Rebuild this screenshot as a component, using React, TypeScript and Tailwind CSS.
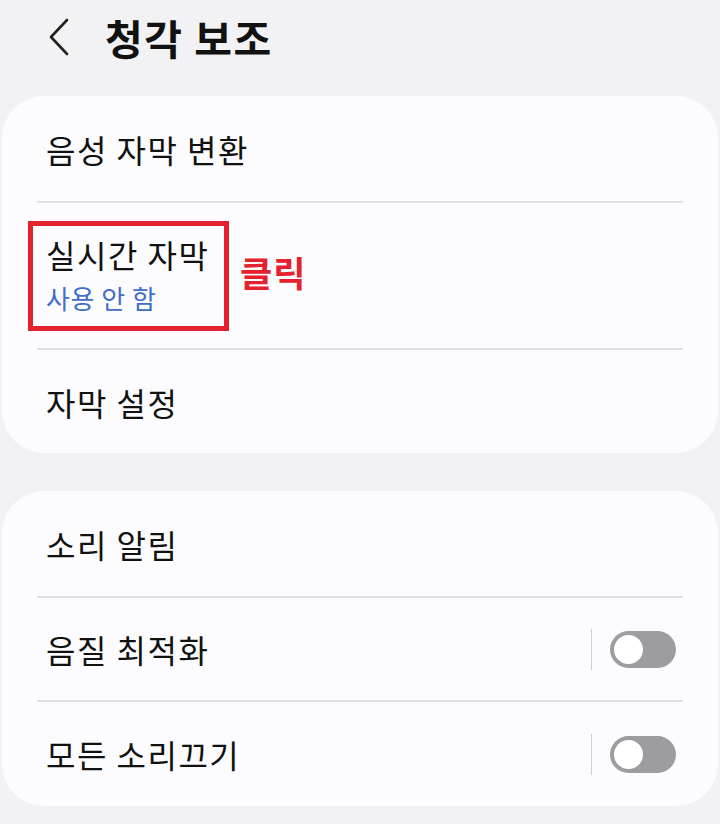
import React from "react";

const font = { fontFamily: '"Noto Sans CJK KR", "Noto Sans", sans-serif' };

function Toggle() {
  return (
    <div className="flex items-center">
      <div className="w-px h-[41px] bg-[#cfcfd2] mr-[18px]" />
      <div className="w-[66px] h-[37px] rounded-full bg-[#9d9da1] flex items-center pl-[4px]">
        <div className="w-[29px] h-[29px] rounded-full bg-white" />
      </div>
    </div>
  );
}

function Divider() {
  return <div className="mx-[35px] h-[2px] bg-[#e0e0e3]" />;
}

function Row({ label, toggle, h = "h-[104px]" }: { label: string; toggle?: boolean; h?: string }) {
  return (
    <div className={`${h} flex items-center justify-between pl-[44px] pr-[42px]`}>
      <span className="text-[32px] tracking-[1.5px] text-[#111] leading-none">{label}</span>
      {toggle && <Toggle />}
    </div>
  );
}

export default function App() {
  return (
    <div className="w-[720px] h-[824px] bg-[#f2f2f4] overflow-hidden" style={font}>
      <div className="h-[96px] flex items-center pb-[22px]">
        <svg className="ml-[47px] w-[24px] h-[38px]" viewBox="0 0 24 38" fill="none">
          <path d="M20 2 L4 19 L20 36" stroke="#222" strokeWidth="2.6" strokeLinecap="round" strokeLinejoin="round" />
        </svg>
        <h1 className="ml-[34px] text-[41px] tracking-[1.5px] font-bold text-[#111] leading-none">청각 보조</h1>
      </div>

      <div className="mx-[2px] bg-[#fcfcfe] rounded-[42px]">
        <Row label="음성 자막 변환" h="h-[105px]" />
        <Divider />
        <div className="h-[145px] flex items-center pl-[26px]">
          <div className="w-[201px] border-[5px] border-[#e3222e] pl-[13px] pt-[12px] pb-[15px]">
            <div className="text-[32px] tracking-[1.5px] text-[#111] leading-none whitespace-nowrap">실시간 자막</div>
            <div className="mt-[15px] text-[26px] tracking-[0.5px] text-[#3f6fc6] leading-none whitespace-nowrap">사용 안 함</div>
          </div>
          <span className="ml-[11px] mb-[8px] text-[35px] tracking-[1px] font-bold text-[#e3222e] leading-none">클릭</span>
        </div>
        <Divider />
        <Row label="자막 설정" h="h-[103px]" />
      </div>

      <div className="mx-[2px] mt-[38px] bg-[#fcfcfe] rounded-[42px]">
        <Row label="소리 알림" h="h-[105px]" />
        <Divider />
        <Row label="음질 최적화" h="h-[102px]" toggle />
        <Divider />
        <Row label="모든 소리끄기" h="h-[104px]" toggle />
      </div>
    </div>
  );
}
